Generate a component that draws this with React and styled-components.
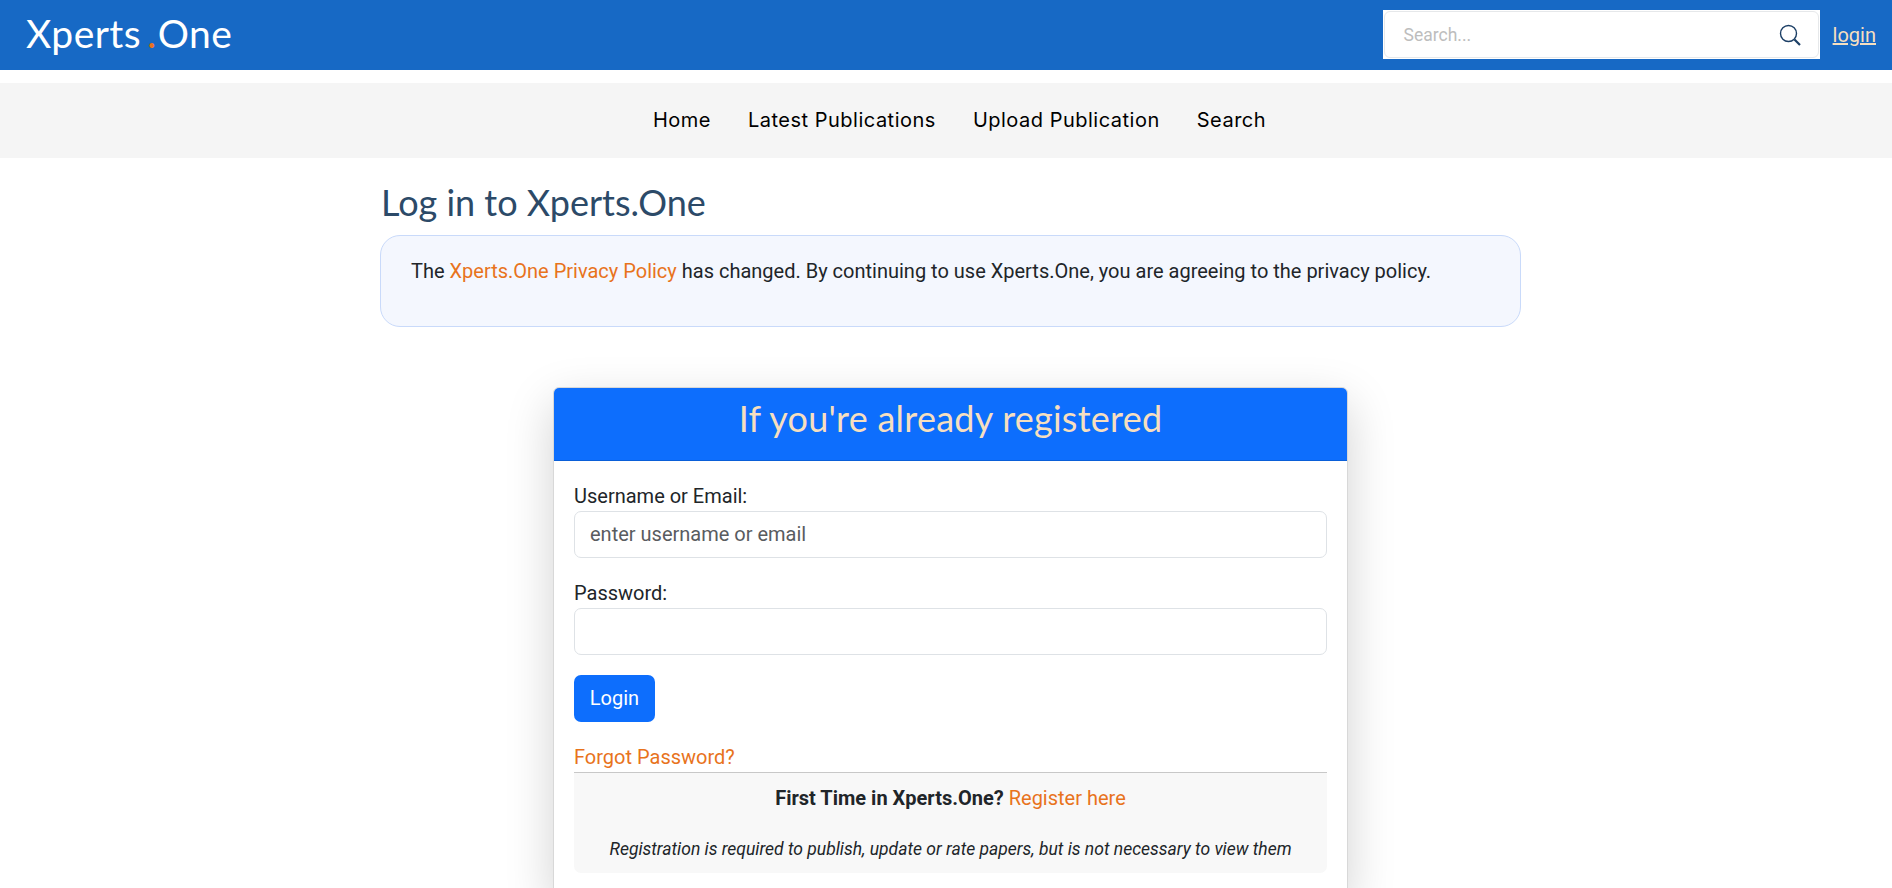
import React from 'react';
import styled, { createGlobalStyle } from 'styled-components';

const GlobalStyle = createGlobalStyle`
  html, body {
    margin: 0;
    height: 888px;
    overflow: hidden;
    background: #fff;
    font-family: Roboto, "Liberation Sans", sans-serif;
    font-size: 20px;
    line-height: 30px;
    color: #212529;
  }
  * { box-sizing: border-box; }
`;

const TopBar = styled.header`
  height: 70px;
  background: #1769c5;
  display: flex;
  align-items: center;
  padding: 0 16px 0 26px;
`;

const Logo = styled.a`
  font-family: Lato, sans-serif;
  font-size: 39px;
  line-height: 44px;
  margin-top: -5px;
  color: #fff;
  letter-spacing: 0.45px;
  margin-right: auto;
  span { color: #e8731c; margin: 0 1px 0 6px; }
`;

const SearchBox = styled.div`
  width: 437px;
  height: 49px;
  margin-top: -1px;
  background: #fff;
  padding: 1px;
`;

const SearchInner = styled.div`
  height: 100%;
  border: 1px solid #e6e8ea;
  border-radius: 6px;
  display: flex;
  align-items: center;
  justify-content: space-between;
  padding: 0 16px 0 19px;
  font-size: 17.5px;
  color: #bdbdbd;
`;

const LoginLink = styled.a`
  margin-left: 13px;
  color: #f6dfc0;
  text-decoration: underline;
`;

const NavBar = styled.nav`
  height: 75px;
  margin-top: 13px;
  padding: 0 0 2px 27px;
  background: #f5f5f5;
  display: flex;
  align-items: center;
  justify-content: center;
  gap: 37px;
`;

const NavItem = styled.a`
  font-family: Inter, sans-serif;
  font-size: 20px;
  letter-spacing: 0.5px;
  color: #000;
`;

const Main = styled.main`
  width: 1141px;
  margin-left: 380px;
`;

const Title = styled.h1`
  margin: 24px 0 13px 1px;
  font-family: Lato, sans-serif;
  font-weight: 400;
  font-size: 36px;
  line-height: 40px;
  color: #2c4a68;
`;

const Notice = styled.div`
  height: 92px;
  padding: 20px 30px;
  background: #f4f7fe;
  border: 1px solid #c9dafa;
  border-radius: 20px;
`;

const Link = styled.a`
  color: #e8731c;
`;

const Card = styled.section`
  width: 795px;
  margin: 60px auto 0;
  background: #fff;
  border: 1px solid #d8d8d8;
  border-radius: 6px;
  box-shadow: 0 16px 48px rgba(0, 0, 0, 0.18);
`;

const CardHeader = styled.div`
  height: 73px;
  background: #0d6efd;
  border-radius: 5px 5px 0 0;
  border-bottom: 1px solid #0a5fd8;
  text-align: center;
  padding-top: 8px;
  font-family: Lato, sans-serif;
  font-size: 36px;
  letter-spacing: 0.25px;
  line-height: 44px;
  color: #f6dfc0;
`;

const CardBody = styled.div`
  padding: 20px 20px;
`;

const Label = styled.label`
  display: block;
`;

const Input = styled.input`
  display: block;
  width: 100%;
  height: 47px;
  margin-bottom: 20px;
  padding: 0 15px 2px;
  border: 1px solid #dee2e6;
  border-radius: 7px;
  font: inherit;
  color: #212529;
  &::placeholder { color: #595c5f; opacity: 1; }
`;

const Button = styled.button`
  display: block;
  width: 81px;
  height: 47px;
  padding: 0 0 1px;
  border: 0;
  border-radius: 7px;
  background: #0d6efd;
  color: #fff;
  font: inherit;
`;

const Forgot = styled(Link)`
  display: block;
  margin-top: 20px;
  border-bottom: 1px solid #c8c8c8;
`;

const RegisterBox = styled.div`
  height: 100px;
  background: #f8f8f8;
  border-radius: 0 0 7px 7px;
  text-align: center;
  padding-top: 10px;
  p { margin: 0 0 20px; }
  strong { font-weight: 700; }
  em { font-size: 17.5px; }
`;

function SearchIcon() {
  return (
    <svg width="24" height="24" viewBox="0 0 24 24" fill="none" stroke="#1c3f66" strokeWidth="1.4">
      <circle cx="10.5" cy="10.5" r="8" />
      <path d="M16.5 16.5 22 22" strokeWidth="2.2" />
    </svg>
  );
}

export default function App() {
  return (
    <>
      <GlobalStyle />
      <TopBar>
        <Logo>Xperts<span>.</span>One</Logo>
        <SearchBox>
          <SearchInner>
            Search...
            <SearchIcon />
          </SearchInner>
        </SearchBox>
        <LoginLink>login</LoginLink>
      </TopBar>
      <NavBar>
        <NavItem>Home</NavItem>
        <NavItem>Latest Publications</NavItem>
        <NavItem>Upload Publication</NavItem>
        <NavItem>Search</NavItem>
      </NavBar>
      <Main>
        <Title>Log in to Xperts.One</Title>
        <Notice>
          The <Link>Xperts.One Privacy Policy</Link> has changed. By continuing to use Xperts.One, you are agreeing to the privacy policy.
        </Notice>
        <Card>
          <CardHeader>If you're already registered</CardHeader>
          <CardBody>
            <Label>Username or Email:</Label>
            <Input placeholder="enter username or email" />
            <Label>Password:</Label>
            <Input type="password" />
            <Button>Login</Button>
            <Forgot>Forgot Password?</Forgot>
            <RegisterBox>
              <p><strong>First Time in Xperts.One?</strong> <Link>Register here</Link></p>
              <em>Registration is required to publish, update or rate papers, but is not necessary to view them</em>
            </RegisterBox>
          </CardBody>
        </Card>
      </Main>
    </>
  );
}
